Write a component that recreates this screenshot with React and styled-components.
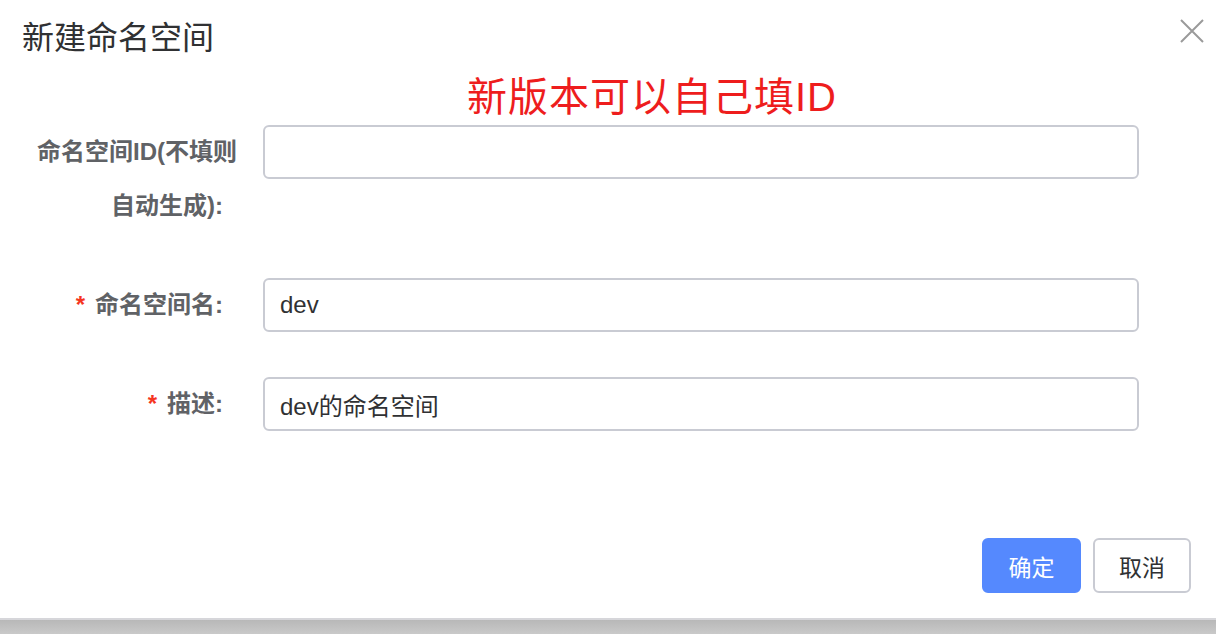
import React from "react";
import styled, { createGlobalStyle } from "styled-components";

const GlobalStyle = createGlobalStyle`
    html, body {
        margin: 0;
        padding: 0;
        background: #fff;
    }
    body {
        font-family: "Liberation Sans", "Noto Sans CJK SC", sans-serif;
    }
`;

const Dialog = styled.div`
    width: 1216px;
    height: 634px;
    display: flex;
    flex-direction: column;
    background: #fff;
    overflow: hidden;
`;

const Header = styled.div`
    height: 76px;
    display: flex;
    justify-content: space-between;
    align-items: flex-start;
    padding: 0 10px 0 22px;
`;

const Title = styled.h2`
    margin: 0;
    font-size: 32px;
    font-weight: 400;
    line-height: 76px;
    color: #303133;
`;

const CloseButton = styled.button`
    margin-top: 17px;
    width: 28px;
    height: 28px;
    padding: 0;
    border: none;
    background: none;
    cursor: pointer;
    display: flex;
    align-items: center;
    justify-content: center;
`;

const Note = styled.div`
    padding-left: 467px;
    font-size: 40px;
    line-height: 42px;
    letter-spacing: 1px;
    color: #ee1d1d;
`;

const Form = styled.form`
    margin-top: 7px;
    display: flex;
    flex-direction: column;
    gap: 45px;
`;

const FormItem = styled.div`
    display: grid;
    grid-template-columns: 263px 876px;
    align-items: start;
`;

const Label = styled.label`
    padding-right: 40px;
    text-align: right;
    font-size: 24px;
    font-weight: 700;
    line-height: 54px;
    color: #606266;
`;

const LabelLine = styled.span`
    display: block;
    margin-right: ${(p) => (p.$overhang ? "-14px" : "0")};
`;

const Required = styled.span`
    color: #f5361f;
    margin-right: 10px;
`;

const Input = styled.input`
    box-sizing: border-box;
    width: 100%;
    height: 54px;
    padding: 0 15px;
    border: 2px solid #c9cbd3;
    border-radius: 6px;
    font-family: "Liberation Sans", "Noto Sans CJK SC", sans-serif;
    font-size: 24px;
    color: #303133;
    outline: none;
    background: #fff;
`;

const Footer = styled.div`
    margin-top: auto;
    display: flex;
    justify-content: flex-end;
    gap: 12px;
    padding: 0 25px 25px 0;
`;

const Button = styled.button`
    box-sizing: border-box;
    height: 55px;
    width: ${(p) => (p.$primary ? "99px" : "98px")};
    border-radius: 6px;
    border: 2px solid ${(p) => (p.$primary ? "#5589fe" : "#c9cbd3")};
    background: ${(p) => (p.$primary ? "#5589fe" : "#fff")};
    color: ${(p) => (p.$primary ? "#fff" : "#303133")};
    font-family: "Liberation Sans", "Noto Sans CJK SC", sans-serif;
    font-size: 23px;
    cursor: pointer;
`;

const Shade = styled.div`
    box-sizing: border-box;
    height: 16px;
    flex-shrink: 0;
    border-top: 2px solid #d6d6da;
    background: linear-gradient(#b8b8b8, #c9c9c9);
`;

const CloseIcon = () => (
    <svg width="26" height="26" viewBox="0 0 26 26">
        <path d="M2 2 L24 24 M24 2 L2 24" stroke="#9a9a9a" strokeWidth="2" fill="none" />
    </svg>
);

const App = () => {
    return (
        <>
            <GlobalStyle />
            <Dialog>
                <Header>
                    <Title>新建命名空间</Title>
                    <CloseButton type="button" aria-label="关闭">
                        <CloseIcon />
                    </CloseButton>
                </Header>
                <Note>新版本可以自己填ID</Note>
                <Form onSubmit={(e) => e.preventDefault()}>
                    <FormItem>
                        <Label>
                            <LabelLine $overhang>命名空间ID(不填则</LabelLine>
                            <LabelLine>自动生成):</LabelLine>
                        </Label>
                        <Input defaultValue="" />
                    </FormItem>
                    <FormItem>
                        <Label>
                            <Required>*</Required>命名空间名:
                        </Label>
                        <Input defaultValue="dev" />
                    </FormItem>
                    <FormItem>
                        <Label>
                            <Required>*</Required>描述:
                        </Label>
                        <Input defaultValue="dev的命名空间" />
                    </FormItem>
                </Form>
                <Footer>
                    <Button type="button" $primary>确定</Button>
                    <Button type="button">取消</Button>
                </Footer>
                <Shade />
            </Dialog>
        </>
    );
};

export default App;
